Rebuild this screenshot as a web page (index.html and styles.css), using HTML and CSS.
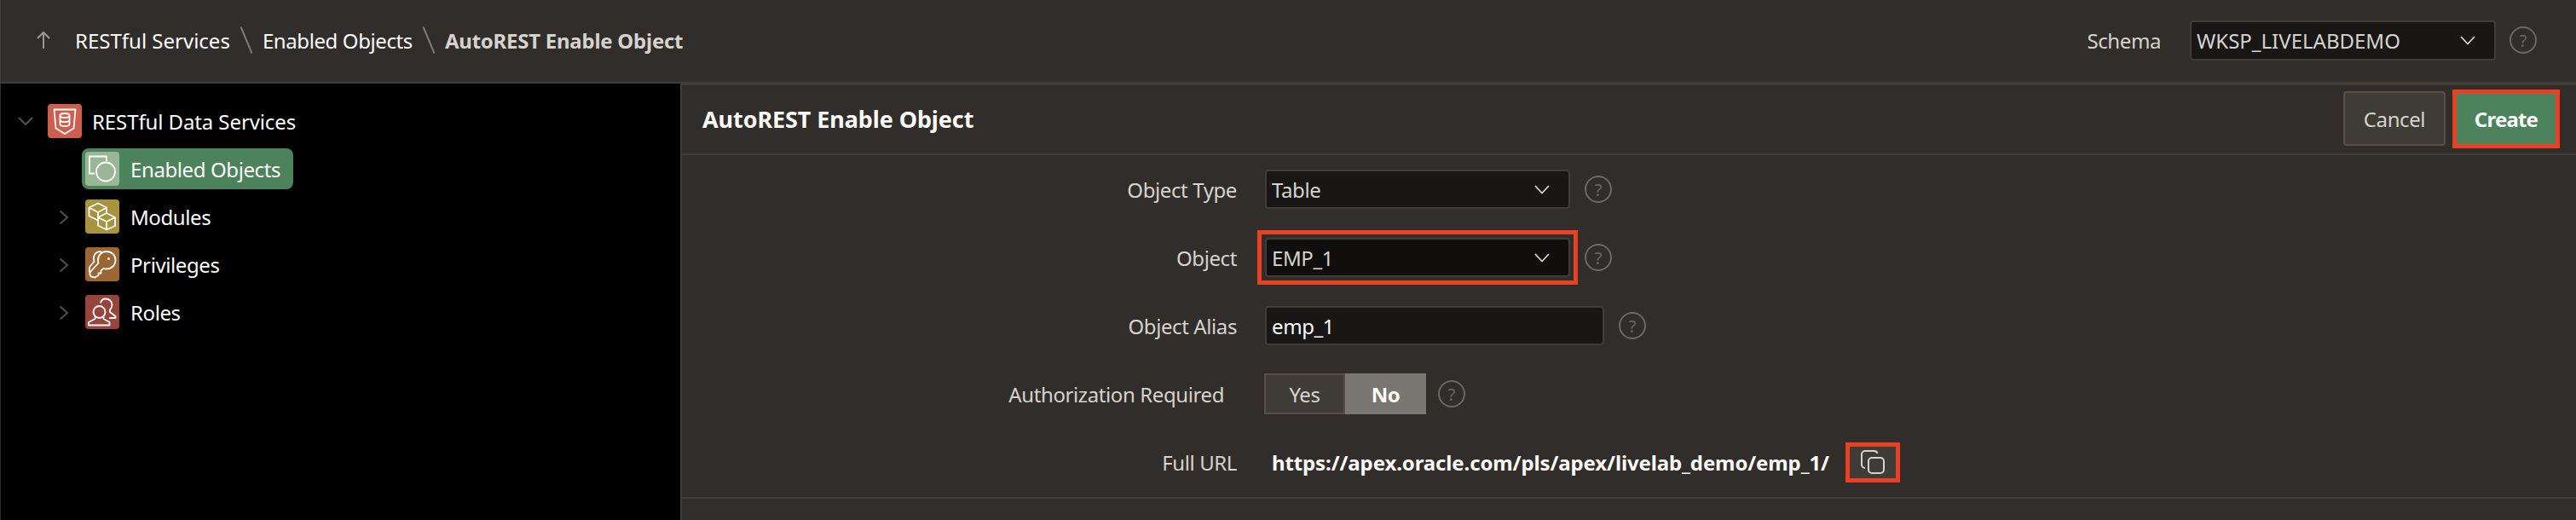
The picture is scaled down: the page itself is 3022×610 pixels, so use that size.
FILE: index.html
```html
<!DOCTYPE html>
<html lang="en">
<head>
<meta charset="utf-8">
<title>AutoREST Enable Object</title>
<link rel="stylesheet" href="styles.css">
</head>
<body>
<div class="app">
  <header class="topbar">
    <nav class="crumbs">
      <svg class="up" width="18" height="22" viewBox="0 0 18 22"><path d="M9 21V2M2 9l7-7 7 7"/></svg>
      <a class="crumb crumb-wide">RESTful Services</a>
      <svg class="sep" width="14" height="32" viewBox="0 0 14 32"><path d="M0.5 0.5L13.5 31.5"/></svg>
      <a class="crumb">Enabled Objects</a>
      <svg class="sep" width="14" height="32" viewBox="0 0 14 32"><path d="M0.5 0.5L13.5 31.5"/></svg>
      <span class="crumb current">AutoREST Enable Object</span>
    </nav>
    <div class="schema">
      <span class="schema-label">Schema</span>
      <div class="select select-schema"><span>WKSP_LIVELABDEMO</span><svg class="caret" width="18" height="11" viewBox="0 0 18 11"><path d="M1 1l8 8.5L17 1"/></svg></div>
      <span class="help">?</span>
    </div>
  </header>
  <main class="main">
    <aside class="tree">
      <div class="node node-root">
        <svg class="twist" width="18" height="10" viewBox="0 0 18 10"><path d="M1 1l8 8 8-8"/></svg>
        <span class="ico ico-rest">
          <svg width="40" height="40" viewBox="0 0 40 40"><path class="w" d="M7.5 6.5H32.5L30.5 28.5L20 35L9.500 28.500Z"/><ellipse class="w" cx="20" cy="13.500" rx="5.500" ry="2.500"/><path class="w" d="M14.500 13.500V23.500C14.500 25 17 26 20 26S25.500 25 25.500 23.500V13.500M14.500 18.500C14.500 20 17 21 20 21S25.500 20 25.500 18.500"/></svg>
        </span>
        <span class="node-text">RESTful Data Services</span>
      </div>
      <div class="node node-child node-selected">
        <span class="ico ico-enabled">
          <svg width="40" height="40" viewBox="0 0 40 40"><path class="w" d="M11 25.500H5V5.500H25V11"/><circle class="w" cx="24" cy="23.500" r="11"/></svg>
        </span>
        <span class="node-text">Enabled Objects</span>
      </div>
      <div class="node node-child">
        <svg class="twist-r" width="12" height="18" viewBox="0 0 12 18"><path d="M1.500 1.500L10 9l-8.500 7.500"/></svg>
        <span class="ico ico-modules">
          <svg width="40" height="40" viewBox="0 0 40 40"><path class="w" d="M25 16V9.500L15 4.500L4.500 9.500V19.500L15 24.500M4.500 9.500L15 15L25 9.500M15 15V21"/><path class="w" d="M25 16L35 21V31L25 35.500L15 30.500V21ZM15 21L25 26L35 21M25 26V35.500"/></svg>
        </span>
        <span class="node-text">Modules</span>
      </div>
      <div class="node node-child">
        <svg class="twist-r" width="12" height="18" viewBox="0 0 12 18"><path d="M1.500 1.500L10 9l-8.500 7.500"/></svg>
        <span class="ico ico-priv">
          <svg width="40" height="40" viewBox="0 0 40 40"><path class="w" d="M15 15C15 9 19.500 5 25 5C31 5 35.500 9.500 35.500 15C35.500 21 31 25.500 25 25.500C23.500 25.500 22.500 25.200 21.500 24.800L18.500 27.500V30.500H15.500V33L11.500 35.500L7 34.500C5.500 33 5 31 5.500 29.500L15.500 18.500C15.200 17.500 15 16 15 15Z"/><path class="w" d="M19.500 5.500C14 4 9.500 8 10 14L10.500 17L6 22C4.500 24 4.500 27 5.500 29.500"/><circle class="f" cx="27.500" cy="13.500" r="1.500"/></svg>
        </span>
        <span class="node-text">Privileges</span>
      </div>
      <div class="node node-child">
        <svg class="twist-r" width="12" height="18" viewBox="0 0 12 18"><path d="M1.500 1.500L10 9l-8.500 7.500"/></svg>
        <span class="ico ico-roles">
          <svg width="40" height="40" viewBox="0 0 40 40"><path class="w" d="M18 9.500C18.500 6.500 21 4.500 24 4.500C28 4.500 31.500 7.500 31.500 11.500C31.500 14 30.500 16 29 17.500V20L35.500 25V27H28"/><circle class="w" cx="16.500" cy="20" r="7"/><path class="w" d="M11.500 25.500V28L4 32V35.500H28.500V32L21.500 28V25.500"/></svg>
        </span>
        <span class="node-text">Roles</span>
      </div>
    </aside>
    <section class="panel">
      <div class="panel-head">
        <h1 class="panel-title">AutoREST Enable Object</h1>
        <div class="actions">
          <button class="btn btn-cancel">Cancel</button>
          <button class="btn btn-create marked">Create</button>
        </div>
      </div>
      <div class="form">
        <div class="row">
          <label class="lbl">Object Type</label>
          <div class="select"><span>Table</span><svg class="caret" width="18" height="11" viewBox="0 0 18 11"><path d="M1 1l8 8.500L17 1"/></svg></div>
          <span class="help">?</span>
        </div>
        <div class="row">
          <label class="lbl">Object</label>
          <div class="mark-wrap marked"><div class="select select-focus"><span>EMP_1</span><svg class="caret" width="18" height="11" viewBox="0 0 18 11"><path d="M1 1l8 8.500L17 1"/></svg></div></div>
          <span class="help">?</span>
        </div>
        <div class="row">
          <label class="lbl">Object Alias</label>
          <div class="input">emp_1</div>
          <span class="help">?</span>
        </div>
        <div class="row">
          <label class="lbl lbl-auth">Authorization Required</label>
          <div class="toggle"><span class="opt">Yes</span><span class="opt opt-on">No</span></div>
          <span class="help help-tight">?</span>
        </div>
        <div class="row">
          <label class="lbl">Full URL</label>
          <span class="url">https://apex.oracle.com/pls/apex/livelab_demo/emp_1/</span>
          <button class="copy marked">
            <svg width="28" height="28" viewBox="0 0 28 28"><path d="M5 21A4 4 0 0 1 1 17V5A4 4 0 0 1 5 1H16A4 4 0 0 1 19.500 4"/><rect x="9" y="9" width="18" height="18" rx="4"/></svg>
          </button>
        </div>
      </div>
    </section>
  </main>
</div>
</body>
</html>
```
FILE: styles.css
```css
* { box-sizing: border-box; }
html, body { margin: 0; height: 100%; }
body {
  background: #312d2a;
  color: #fcfbfa;
  font-family: "Noto Sans", "Open Sans", sans-serif;
  font-size: 24px;
  letter-spacing: -0.4px;
  overflow: hidden;
}
.app { display: flex; flex-direction: column; width: 3022px; height: 610px; }

.topbar {
  height: 98px;
  flex: none;
  display: flex;
  align-items: center;
  justify-content: space-between;
  border-bottom: 2px solid #403c38;
  box-shadow: inset 1px 0 0 #403c38;
  padding: 0 46px 2px 42px;
}
.crumbs { display: flex; align-items: center; }
.up { margin-right: 28px; }
.up path { fill: none; stroke: #9a9794; stroke-width: 2; }
.sep { margin: 0 12px; }
.sep path { fill: none; stroke: #7d7a76; stroke-width: 2; }
.crumb { color: #fcfbfa; white-space: nowrap; }
.crumb-wide { letter-spacing: 0; }
.current { color: #d6d3cf; font-weight: 700; letter-spacing: -0.25px; }

.schema { display: flex; align-items: center; }
.schema-label { color: #d6d3cf; margin-right: 34px; }
.select {
  width: 358px;
  height: 46px;
  display: flex;
  align-items: center;
  justify-content: space-between;
  padding: 0 22px 0 6px;
  background: #181715;
  border: 2px solid #403c38;
  border-radius: 4px;
  color: #d6d3cf;
}
.select-schema { width: 359px; height: 47px; letter-spacing: 0; }
.select-focus { background: #100f0e; }
.caret path { fill: none; stroke: #d6d3cf; stroke-width: 1.800; }
.help {
  width: 32px;
  height: 32px;
  flex: none;
  margin-left: 17px;
  display: flex;
  align-items: center;
  justify-content: center;
  border: 2px solid #6b6865;
  border-radius: 50%;
  color: #6b6865;
  font-size: 20px;
}
.help-tight { margin-left: 14px; }
.schema .help { margin-left: 16px; }

.main { flex: 1; display: flex; min-height: 0; }
.tree {
  width: 800px;
  flex: none;
  background: #000;
  border-right: 2px solid #403c38;
  box-shadow: inset 1px 0 0 #2c2c2c;
  padding: 24px 0 0 0;
}
.node { display: flex; align-items: center; height: 40px; position: relative; margin-bottom: 16px; }
.node-root { padding-left: 21px; margin-bottom: 12px; }
.twist { margin-right: 17px; }
.twist path, .twist-r path { fill: none; stroke: #504d4a; stroke-width: 2.200; }
.node-child { padding-left: 100px; }
.twist-r { position: absolute; left: 69px; top: 12px; }
.node-selected {
  width: 248px;
  height: 48px;
  margin: 0 0 12px 96px;
  padding-left: 4px;
  background: #4c825c;
  border-radius: 8px;
}
.ico { width: 40px; height: 40px; flex: none; border-radius: 4px; display: block; }
.ico svg { display: block; }
.w { fill: none; stroke: #fff; stroke-width: 1.800; stroke-linejoin: round; }
.f { fill: #fff; }
.ico-rest { background: #cc5f4e; }
.ico-enabled { background: #9ab795; }
.ico-modules { background: #a8933f; }
.ico-priv { background: #9b6534; }
.ico-roles { background: #97443c; }
.node-text { margin-left: 13px; white-space: nowrap; color: #fcfbfa; }
.node-root .node-text { margin-left: 12px; letter-spacing: -0.1px; }

.panel { flex: 1; min-width: 0; border-top: 2px solid #403c38; }
.panel-head {
  height: 82px;
  display: flex;
  align-items: center;
  justify-content: space-between;
  border-bottom: 2px solid #403c38;
  padding: 0 24px 2px 24px;
}
.panel-title { margin: 0; font-size: 27px; letter-spacing: -0.1px; font-weight: 700; color: #fcfbfa; }
.actions { display: flex; align-items: center; gap: 13px; }
.btn { font: inherit; letter-spacing: inherit; border-radius: 4px; color: #fcfbfa; cursor: default; }
.btn-cancel {
  width: 120px;
  height: 64px;
  background: #3f3b37;
  border: 2px solid #544f4b;
  color: #d6d3cf;
}
.btn-create {
  width: 116px;
  height: 59px;
  background: #4c825c;
  border: 0;
  border-radius: 0;
  font-weight: 700;
  letter-spacing: -0.8px;
}
.marked { outline: 5px solid #ea4125; }
.mark-wrap { outline-offset: 4px; }

.form { border-bottom: 2px solid #403c38; height: 403px; }
.row { display: flex; align-items: center; height: 80px; }
.lbl { width: 651px; flex: none; margin-right: 33px; text-align: right; color: #d6d3cf; white-space: nowrap; }
.lbl-auth { width: 636px; margin-right: 47px; }
.input {
  width: 398px;
  height: 46px;
  display: flex;
  align-items: center;
  padding: 0 6px;
  background: #181715;
  border: 2px solid #403c38;
  border-radius: 4px;
  color: #fcfbfa;
}
.toggle { display: flex; height: 48px; width: 190px; }
.opt {
  flex: 1;
  display: flex;
  align-items: center;
  justify-content: center;
  background: #3f3b37;
  border: 2px solid #544f4b;
  color: #d6d3cf;
}
.opt-on { background: #7a7671; border-color: #7a7671; color: #fff; font-weight: 700; }
.url { margin-left: 8px; font-weight: 700; letter-spacing: -0.12px; color: #fcfbfa; white-space: nowrap; }
.copy {
  width: 54px;
  height: 37px;
  margin-left: 24px;
  padding: 0;
  display: flex;
  align-items: center;
  justify-content: center;
  background: #3f3b37;
  border: 0;
}
.copy svg { fill: none; stroke: #d6d3cf; stroke-width: 2; }
```
